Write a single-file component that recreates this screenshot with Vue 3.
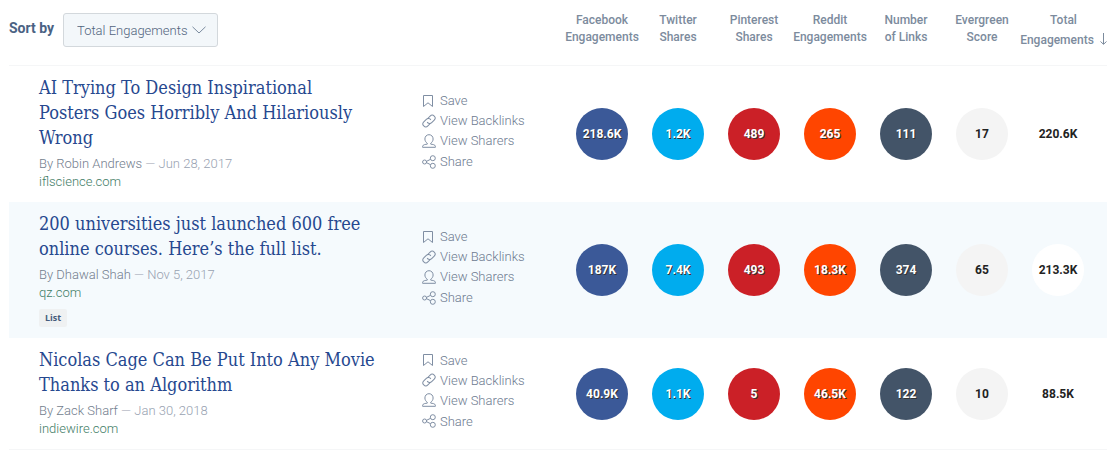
<script setup>
import { ref } from 'vue'

const sortBy = ref('total')

const columns = [
  { key: 'facebook', top: 'Facebook', bottom: 'Engagements' },
  { key: 'twitter', top: 'Twitter', bottom: 'Shares' },
  { key: 'pinterest', top: 'Pinterest', bottom: 'Shares' },
  { key: 'reddit', top: 'Reddit', bottom: 'Engagements' },
  { key: 'links', top: 'Number', bottom: 'of Links' },
  { key: 'evergreen', top: 'Evergreen', bottom: 'Score' }
]

const articles = [
  {
    title: 'AI Trying To Design Inspirational Posters Goes Horribly And Hilariously Wrong',
    author: 'Robin Andrews',
    date: 'Jun 28, 2017',
    domain: 'iflscience.com',
    facebook: '218.6K', twitter: '1.2K', pinterest: '489', reddit: '265', links: '111', evergreen: '17', total: '220.6K'
  },
  {
    title: '200 universities just launched 600 free online courses. Here’s the full list.',
    author: 'Dhawal Shah',
    date: 'Nov 5, 2017',
    domain: 'qz.com',
    tag: 'List',
    facebook: '187K', twitter: '7.4K', pinterest: '493', reddit: '18.3K', links: '374', evergreen: '65', total: '213.3K'
  },
  {
    title: 'Nicolas Cage Can Be Put Into Any Movie Thanks to an Algorithm',
    author: 'Zack Sharf',
    date: 'Jan 30, 2018',
    domain: 'indiewire.com',
    facebook: '40.9K', twitter: '1.1K', pinterest: '5', reddit: '46.5K', links: '122', evergreen: '10', total: '88.5K'
  }
]
</script>

<template>
  <main class="page">
    <table class="results">
      <colgroup>
        <col />
        <col class="col-actions" />
        <col v-for="c in columns" :key="c.key" class="col-stat" />
        <col class="col-total" />
      </colgroup>
      <thead>
        <tr>
          <td colspan="2" class="sort-cell">
            <div class="sort">
              <label for="sort">Sort by</label>
              <span class="picker">
                <select id="sort" v-model="sortBy">
                  <option value="total">Total Engagements</option>
                  <option value="facebook">Facebook Engagements</option>
                  <option value="twitter">Twitter Shares</option>
                </select>
                <svg class="chevron" viewBox="0 0 14 8" aria-hidden="true"><path d="M.5.8 7 7 13.5.8" /></svg>
              </span>
            </div>
          </td>
          <th v-for="c in columns" :key="c.key" scope="col">{{ c.top }}<br />{{ c.bottom }}</th>
          <th scope="col" class="total-head">
            Total<br />Engagements
            <svg class="arrow" viewBox="0 0 7 12" aria-hidden="true"><path d="M3.5 0v11M.5 8.5l3 2.8 3-2.8" /></svg>
          </th>
        </tr>
      </thead>
      <tbody>
        <tr v-for="a in articles" :key="a.title">
          <td class="article">
            <h2><a href="#">{{ a.title }}</a></h2>
            <p class="meta">By {{ a.author }} <span class="date">— {{ a.date }}</span></p>
            <p class="meta"><a href="#" class="domain">{{ a.domain }}</a></p>
            <span v-if="a.tag" class="tag">{{ a.tag }}</span>
          </td>
          <td class="actions">
            <button type="button">
              <svg viewBox="0 0 14 14" aria-hidden="true"><path d="M1.500 1.500h9v11L6 8.800l-4.500 3.700z" /></svg>
              <span>Save</span>
            </button>
            <button type="button">
              <svg viewBox="0 0 14 14" aria-hidden="true">
                <g transform="rotate(-45 7 7)">
                  <path d="M6.500 9.700H2.700a2.900 2.900 0 0 1 0-5.800h3.600a2.900 2.900 0 0 1 2.800 3.600" />
                  <path d="M7.500 4.300h3.800a2.900 2.900 0 0 1 0 5.800H7.700a2.900 2.900 0 0 1-2.800-3.600" />
                </g>
              </svg>
              <span>View Backlinks</span>
            </button>
            <button type="button">
              <svg viewBox="0 0 14 14" aria-hidden="true">
                <path d="M5.300 9.300C3.900 8.300 2.900 6.800 2.900 5 2.900 2.500 4.600.7 7 .7s4.100 1.800 4.100 4.300c0 1.800-1 3.300-2.400 4.300v.8c1.700.4 4.400.3 4.700 2.200v1H.600v-1c.3-1.900 3-1.800 4.700-2.200z" />
              </svg>
              <span>View Sharers</span>
            </button>
            <button type="button" class="share">
              <svg viewBox="0 0 14 14" aria-hidden="true">
                <circle cx="2.600" cy="7" r="2" />
                <circle cx="10.800" cy="3.200" r="2.500" />
                <circle cx="10.800" cy="10.800" r="2.500" />
                <path d="M4.600 6.300 8.400 4.400M4.600 7.700l3.800 1.900" />
              </svg>
              <span>Share</span>
            </button>
          </td>
          <td v-for="c in columns" :key="c.key" class="stat">
            <span class="bubble" :class="c.key">{{ a[c.key] }}</span>
          </td>
          <td class="stat">
            <span class="bubble total">{{ a.total }}</span>
          </td>
        </tr>
      </tbody>
    </table>
  </main>
</template>

<style>
body {
  margin: 0;
  background: #fff;
}
</style>

<style scoped>
.page {
  padding: 0 8px 0 9px;
  font-family: Roboto, "Liberation Sans", sans-serif;
  color: #8793a3;
}
.results {
  width: 100%;
  table-layout: fixed;
  border-collapse: separate;
  border-spacing: 0;
}
.col-actions { width: 142px; }
.col-stat { width: 76px; }
.col-total { width: 87px; }
td, th { padding: 0; }
thead td, thead th {
  height: 53px;
  padding-top: 12px;
  vertical-align: top;
  border-bottom: 1px solid #f5f6f7;
}
th {
  font-size: 12px;
  line-height: 17px;
  font-weight: 500;
  color: #7c8b9d;
  text-align: center;
  white-space: nowrap;
}
.sort {
  display: flex;
  align-items: center;
  padding-top: 1px;
}
.sort label {
  width: 54px;
  font-size: 14px;
  line-height: 30px;
  padding-bottom: 4px;
  font-weight: 700;
  color: #4a6283;
}
.picker {
  position: relative;
  display: inline-flex;
}
select {
  appearance: none;
  width: 155px;
  height: 34px;
  margin: 0;
  padding: 0 28px 0 13px;
  border: 1px solid #d3d8dc;
  border-radius: 3px;
  background: #f3f7fa;
  font-family: inherit;
  font-size: 13px;
  font-weight: 300;
  color: #51647d;
}
.chevron {
  position: absolute;
  top: 13px;
  right: 12px;
  width: 14px;
  height: 8px;
  fill: none;
  stroke: #7a8a9e;
  pointer-events: none;
}
.arrow {
  width: 7px;
  height: 12px;
  padding-top: 4px;
  margin-left: 3px;
  vertical-align: -1px;
  fill: none;
  stroke: #7c8b9d;
}
tbody td { vertical-align: middle; }
tbody tr:nth-child(even) { background: #f5fafd; }
tbody tr:last-child td { border-bottom: 1px solid #f5f6f7; }
tbody .article {
  padding: 9px 46px 11px 30px;
  vertical-align: top;
}
h2 {
  margin: 0 0 5px;
  font-family: "Roboto Slab", "DejaVu Serif Condensed", "DejaVu Serif", serif;
  font-size: 18px;
  line-height: 25px;
  font-weight: 400;
}
h2 a { color: #26488f; text-decoration: none; }
.meta {
  margin: 0;
  font-size: 13px;
  line-height: 18px;
  font-weight: 300;
  color: #727d8d;
}
.date { color: #98a2b1; }
.domain { color: #3f7d66; text-decoration: none; }
.tag {
  display: block;
  width: fit-content;
  margin-top: 7px;
  padding: 0 6px;
  border-radius: 2px;
  background: #eff1f2;
  font-family: "Open Sans", sans-serif;
  font-size: 9px;
  line-height: 18px;
  font-weight: 700;
  color: #465c7c;
}
tbody .actions { padding-bottom: 6px; }
button {
  display: flex;
  align-items: center;
  gap: 4px;
  height: 20px;
  margin: 0;
  padding: 0;
  border: 0;
  background: none;
  font-family: inherit;
  font-size: 13px;
  font-weight: 300;
  color: #6d7b90;
}
button svg {
  width: 14px;
  height: 14px;
  fill: none;
  stroke: #7f8ea3;
}
.share { margin-top: 1px; }
.bubble {
  display: block;
  width: 52px;
  margin-left: 12px;
  border-radius: 50%;
  font-size: 12px;
  line-height: 52px;
  font-weight: 700;
  text-align: center;
  color: #fff;
  text-shadow: 1px 1px 0 #333;
}
.facebook { background: #3b5998; }
.twitter { background: #00acee; }
.pinterest { background: #cb2027; }
.reddit { background: #ff4500; }
.links { background: #435468; }
.evergreen { background: #f4f4f4; }
.total { background: #fff; }
.evergreen, .total {
  color: #222;
  text-shadow: none;
}
</style>
